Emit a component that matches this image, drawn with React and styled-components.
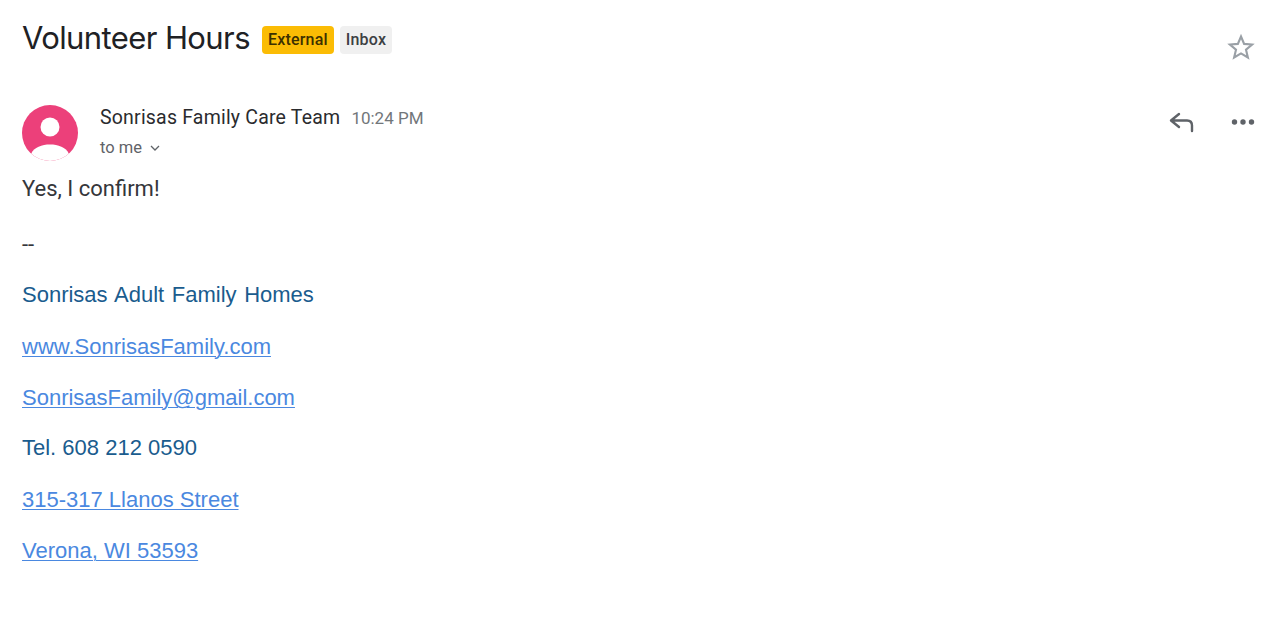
import React from "react";
import styled, { createGlobalStyle } from "styled-components";

const Global = createGlobalStyle`
  html, body { margin: 0; padding: 0; background: #fff; }
  body { font-family: "Roboto", "Liberation Sans", sans-serif; }
`;

const Page = styled.div`
  width: 1280px;
  height: 626px;
  box-sizing: border-box;
  padding: 18px 24px 0 22px;
  overflow: hidden;
  color: #202124;
`;

const SubjectRow = styled.div`
  display: flex;
  align-items: flex-start;
  height: 87px;
`;

const Subject = styled.h1`
  margin: 0;
  font: 400 31px/40px "Inter", sans-serif;
  letter-spacing: -0.6px;
  color: #202124;
`;

const Chip = styled.span`
  display: inline-flex;
  align-items: center;
  height: 28px;
  margin-top: 8px;
  margin-left: ${(p) => p.$gap}px;
  padding: 0 6px;
  border-radius: 4px;
  font: 500 16px/28px "Roboto", sans-serif;
  letter-spacing: 0.2px;
  background: ${(p) => p.$bg};
  color: ${(p) => p.$fg};
`;

const Spacer = styled.div`
  flex: 1;
`;

const StarButton = styled.div`
  display: flex;
  margin-top: 14px;
`;

const SenderRow = styled.div`
  display: flex;
  align-items: flex-start;
  height: 69px;
`;

const Avatar = styled.svg`
  display: block;
  width: 56px;
  height: 56px;
  flex: none;
`;

const SenderInfo = styled.div`
  margin-left: 22px;
  flex: 1;
`;

const NameLine = styled.div`
  display: flex;
  align-items: baseline;
  height: 26px;
`;

const SenderName = styled.span`
  font: 400 19.5px/26px "Roboto", sans-serif;
  letter-spacing: 0.2px;
  color: #2a2b2e;
`;

const Time = styled.span`
  margin-left: 11px;
  font: 400 17px/26px "Roboto", sans-serif;
  color: #72767a;
`;

const ToLine = styled.div`
  display: flex;
  align-items: center;
  gap: 7px;
  margin-top: 7px;
  font: 400 16.5px/20px "Roboto", sans-serif;
  color: #5f6368;
`;

const Actions = styled.div`
  display: flex;
  align-items: center;
  gap: 34px;
  margin-top: 3px;
`;

const Body = styled.div`
  display: flex;
  flex-direction: column;
`;

const Plain = styled.div`
  font: 400 22px/30px "Roboto", sans-serif;
  color: #35363a;
  height: ${(p) => p.$h}px;
`;

const SigLine = styled.div`
  font: 400 22px/30px "Liberation Sans", sans-serif;
  color: #1a5c8e;
  height: ${(p) => p.$h}px;
  word-spacing: ${(p) => p.$ws || 0}px;
`;

const SigLink = styled.a`
  color: #4a88e0;
  text-decoration: underline;
  text-decoration-thickness: 1px;
  text-underline-offset: 2px;
`;

export default function App() {
  return (
    <Page>
      <Global />
      <SubjectRow>
        <Subject>Volunteer Hours</Subject>
        <Chip $gap={12} $bg="#fbbc04" $fg="#3c3000">External</Chip>
        <Chip $gap={6} $bg="#f0f0f0" $fg="#3c4043">Inbox</Chip>
        <Spacer />
        <StarButton>
          <svg width="30" height="30" viewBox="0 0 24 24" fill="none" stroke="#9aa0a6" strokeWidth="1.7" strokeLinejoin="miter">
            <path d="M12 3.6l2.5 5.9 6.4.5-4.9 4.2 1.5 6.2L12 17.1l-5.5 3.3L8 14.2 3.1 10l6.4-.5z" />
          </svg>
        </StarButton>
      </SubjectRow>
      <SenderRow>
        <Avatar viewBox="0 0 56 56">
          <defs>
            <clipPath id="avatarClip"><circle cx="28" cy="28" r="28" /></clipPath>
          </defs>
          <circle cx="28" cy="28" r="28" fill="#ec407a" />
          <circle cx="28" cy="22" r="9.5" fill="#fff" />
          <path clipPath="url(#avatarClip)" d="M9 49c3-7 11-9.500 19-9.500S44 42 47 49v8H9z" fill="#fff" />
        </Avatar>
        <SenderInfo>
          <NameLine>
            <SenderName>Sonrisas Family Care Team</SenderName>
            <Time>10:24 PM</Time>
          </NameLine>
          <ToLine>
            to me
            <svg width="12" height="12" viewBox="0 0 12 12" fill="none" stroke="#5f6368" strokeWidth="1.3">
              <path d="M2 4l4 4 4-4" />
            </svg>
          </ToLine>
        </SenderInfo>
        <Actions>
          <svg width="28" height="28" viewBox="0 0 28 28" fill="none" stroke="#5f6368" strokeWidth="2.4" strokeLinecap="round" strokeLinejoin="round">
            <path d="M11 6L3 12.500 11 19M3.500 12.500H19c3 0 5 2 5 5V23" />
          </svg>
          <svg width="26" height="28" viewBox="0 0 26 28" fill="#5f6368">
            <circle cx="4.500" cy="14" r="2.700" />
            <circle cx="13" cy="14" r="2.700" />
            <circle cx="21.500" cy="14" r="2.700" />
          </svg>
        </Actions>
      </SenderRow>
      <Body>
        <Plain $h={56}>Yes, I confirm!</Plain>
        <Plain $h={50}>--</Plain>
        <SigLine $h={52} $ws={1.5}>Sonrisas Adult Family Homes</SigLine>
        <SigLine $h={51}><SigLink>www.SonrisasFamily.com</SigLink></SigLine>
        <SigLine $h={50}><SigLink>SonrisasFamily@gmail.com</SigLink></SigLine>
        <SigLine $h={52}>Tel. 608 212 0590</SigLine>
        <SigLine $h={51}><SigLink>315-317 Llanos Street</SigLink></SigLine>
        <SigLine $h={51}><SigLink>Verona, WI 53593</SigLink></SigLine>
      </Body>
    </Page>
  );
}
